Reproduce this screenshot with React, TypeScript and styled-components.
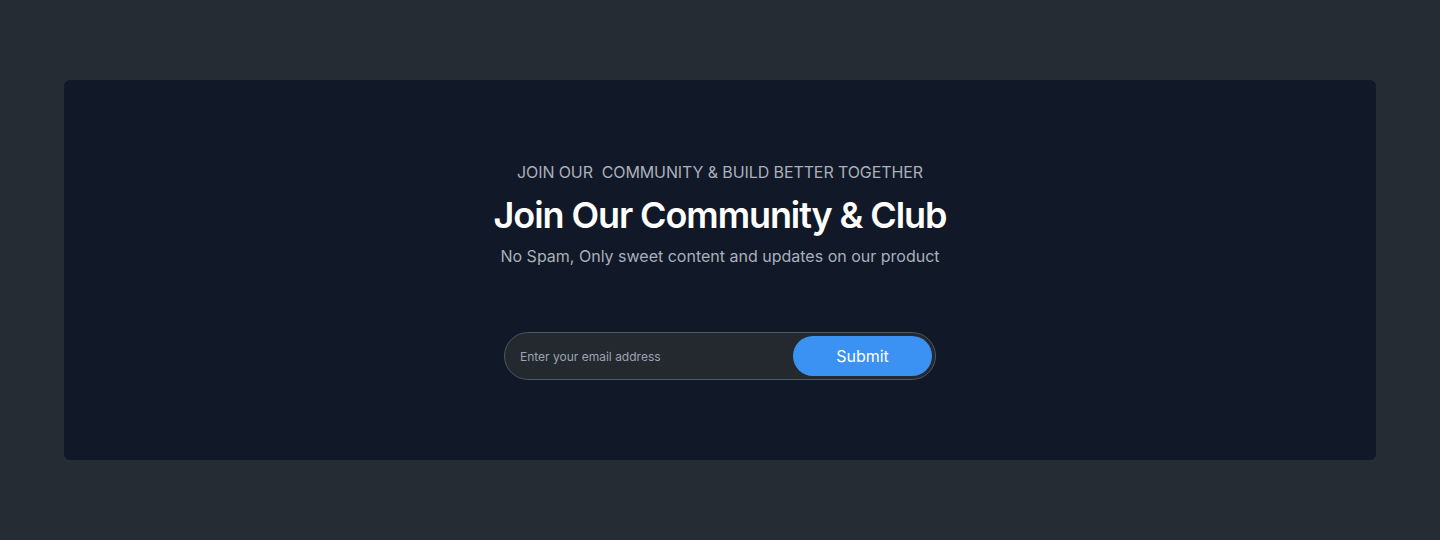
import React from "react";
import styled, { createGlobalStyle } from "styled-components";

const Global = createGlobalStyle`
  html, body { margin: 0; padding: 0; background: #252c33; }
  body { font-family: Inter, "Noto Sans", sans-serif; -webkit-font-smoothing: antialiased; }
  * { box-sizing: border-box; }
`;

const Page = styled.div`
  padding: 80px 64px;
  min-height: 540px;
`;

const Card = styled.section`
  background: #111827;
  border-radius: 6px;
  padding: 80px 24px;
  display: flex;
  flex-direction: column;
  align-items: center;
  text-align: center;
`;

const Eyebrow = styled.p`
  margin: 0;
  font-size: 16px;
  line-height: 24px;
  color: #a9b0bb;
  text-transform: uppercase;
  white-space: pre;
  letter-spacing: -0.1px;
`;

const Title = styled.h2`
  margin: 11px 0 0;
  font-size: 36px;
  line-height: 40px;
  font-weight: 600;
  color: #ffffff;
  letter-spacing: -1.1px;
`;

const Subtitle = styled.p`
  margin: 9px 0 0;
  font-size: 16px;
  line-height: 24px;
  color: #a9b0bb;
`;

const Form = styled.form`
  margin-top: 64px;
  width: 432px;
  height: 48px;
  border: 1px solid #4b5563;
  border-radius: 9999px;
  background: #23292f;
  display: flex;
  align-items: center;
  padding: 0 3px 0 15px;
`;

const EmailInput = styled.input`
  flex: 1;
  min-width: 0;
  background: transparent;
  border: none;
  outline: none;
  font-family: inherit;
  font-size: 12px;
  color: #e5e7eb;
  padding: 0;
  &::placeholder { color: #9ca3af; }
`;

const SubmitButton = styled.button`
  width: 139px;
  height: 40px;
  border: none;
  border-radius: 9999px;
  background: #3b92f3;
  color: #ffffff;
  font-family: inherit;
  font-size: 16px;
  font-weight: 400;
  cursor: pointer;
`;

export default function App() {
  return (
    <>
      <Global />
      <Page>
        <Card>
          <Eyebrow>{"JOIN OUR  COMMUNITY & BUILD BETTER TOGETHER"}</Eyebrow>
          <Title>Join Our Community &amp; Club</Title>
          <Subtitle>No Spam, Only sweet content and updates on our product</Subtitle>
          <Form onSubmit={(e) => e.preventDefault()}>
            <EmailInput type="email" placeholder="Enter your email address" />
            <SubmitButton type="submit">Submit</SubmitButton>
          </Form>
        </Card>
      </Page>
    </>
  );
}
